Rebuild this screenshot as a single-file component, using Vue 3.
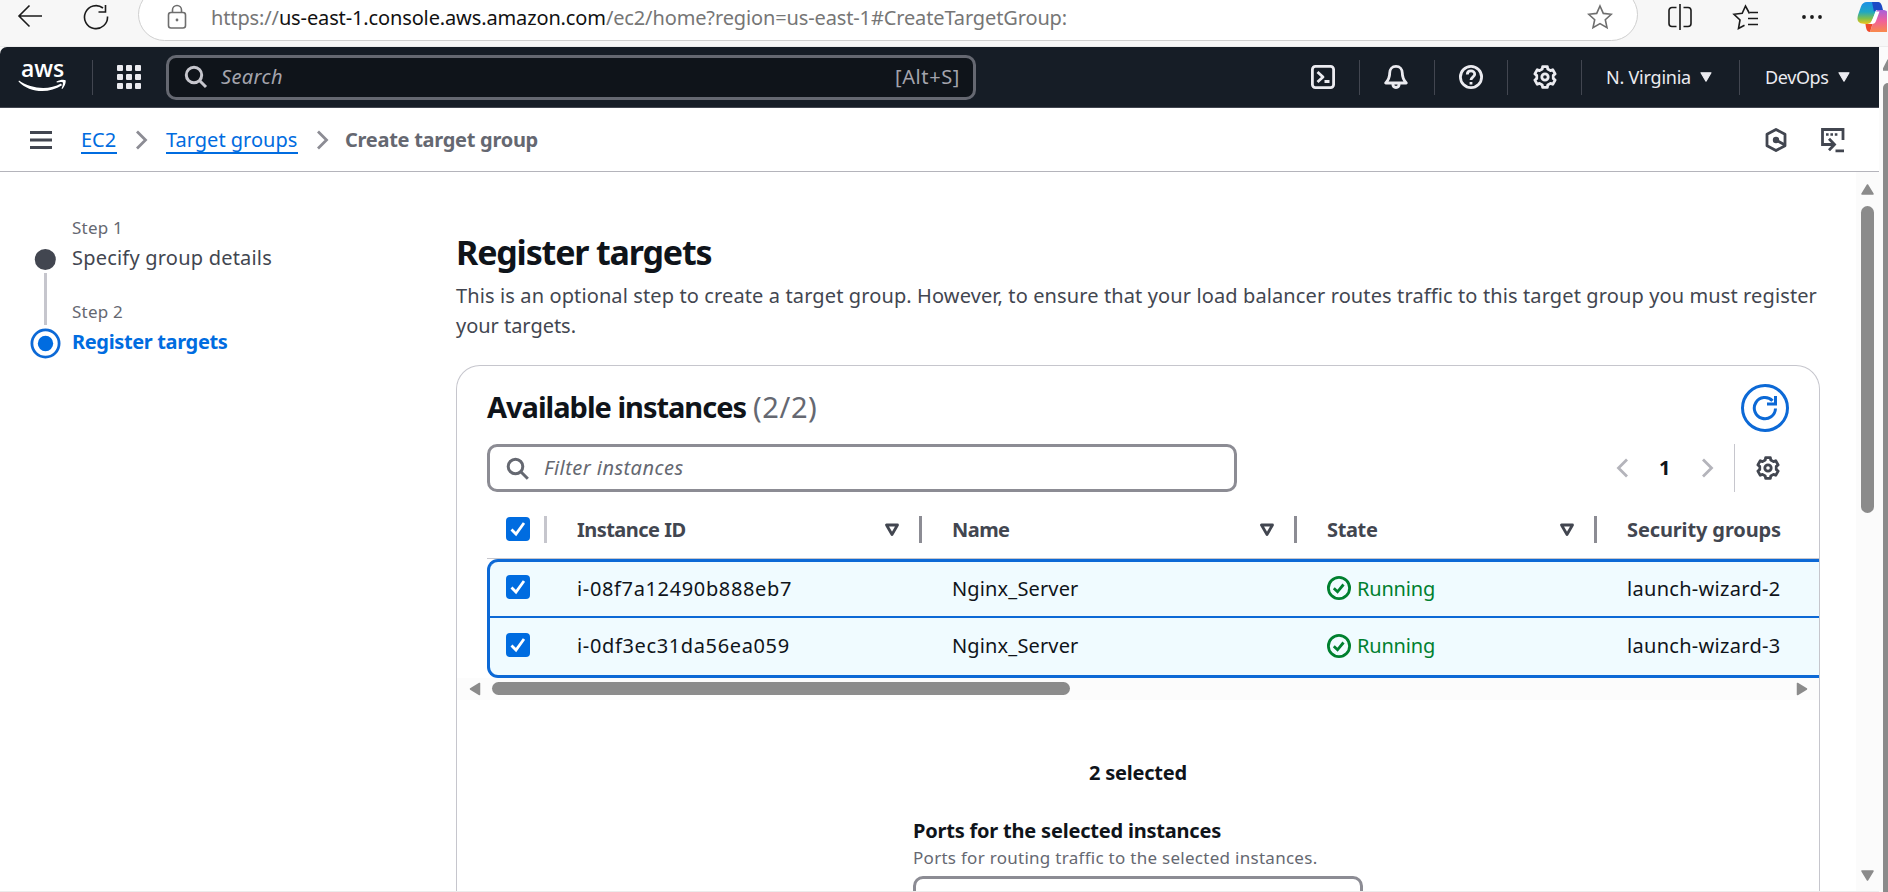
<script setup>
// Six-tooth gear outline, computed around the centre of a 24px box
const gearPath = (() => {
  const pts = []
  for (let i = 0; i < 6; i++) {
    for (const [d, r] of [[-13, 10.6], [13, 10.6], [19, 8.4], [41, 8.4]]) {
      const a = ((i * 60 + d - 90) * Math.PI) / 180
      pts.push(`${(12 + r * Math.cos(a)).toFixed(2)} ${(12 + r * Math.sin(a)).toFixed(2)}`)
    }
  }
  return `M${pts.join('L')}Z`
})()

const instances = [
  { id: 'i-08f7a12490b888eb7', name: 'Nginx_Server', state: 'Running', sg: 'launch-wizard-2' },
  { id: 'i-0df3ec31da56ea059', name: 'Nginx_Server', state: 'Running', sg: 'launch-wizard-3' },
]
</script>

<template>
  <div class="window">
    <div class="chrome">
      <svg class="c-back" width="26" height="26" viewBox="0 0 26 26"><path d="M25 13H2M12.500 2.500L2 13l10.500 10.500" /></svg>
      <svg class="c-reload" width="26" height="26" viewBox="0 0 26 26"><path d="M24.500 12.500A11.500 11.500 0 1 1 20 4M22.500 1v7h-7" /></svg>
      <div class="address">
        <svg class="c-lock" width="20" height="26" viewBox="0 0 20 26"><rect x="1.500" y="8.500" width="17" height="15.500" rx="2.500" /><path d="M5.500 8.500V6a4.500 4.500 0 0 1 9 0v2.500" /><circle class="dot" cx="10" cy="16" r="1.400" /></svg>
        <span class="url">https://<b>us-east-1.console.aws.amazon.com</b>/ec2/home?region=us-east-1#CreateTargetGroup:</span>
        <svg class="c-star" width="26" height="26" viewBox="0 0 26 26"><path d="M13 2l3.300 7.400 8 .9-6 5.400 1.700 8L13 19.600 6 23.700l1.700-8-6-5.400 8-.9z" /></svg>
      </div>
      <svg class="c-split" width="26" height="28" viewBox="0 0 26 28"><path d="M9.500 4.500H5A3 3 0 0 0 2 7.500v13a3 3 0 0 0 3 3h4.500M16.500 4.500H21a3 3 0 0 1 3 3v13a3 3 0 0 1-3 3h-4.500M13 1v26" /></svg>
      <svg class="c-fav" width="28" height="28" viewBox="0 0 28 28"><path d="M17.500 10.500L13.500 3l-3.300 7.300-8.200 1 6 5.700-1.500 8.500 6-3.200M18 9.500h8M16 15.500h10M16 21.500h10" /></svg>
      <svg class="c-more" width="22" height="6" viewBox="0 0 22 6"><circle cx="3" cy="3" r="1.900" /><circle cx="11" cy="3" r="1.900" /><circle cx="19" cy="3" r="1.900" /></svg>
      <svg class="c-copilot" width="30" height="32" viewBox="0 0 30 32">
        <defs>
          <linearGradient id="cpA" x1="0" y1="0" x2="0" y2="1"><stop offset="0" stop-color="#1b8fe6" /><stop offset=".45" stop-color="#1fa7c4" /><stop offset=".75" stop-color="#7fbf4d" /><stop offset="1" stop-color="#f0c419" /></linearGradient>
          <linearGradient id="cpB" x1="0" y1="0" x2="0" y2="1"><stop offset="0" stop-color="#a65fdc" /><stop offset=".5" stop-color="#f0609a" /><stop offset="1" stop-color="#f98a4b" /></linearGradient>
        </defs>
        <path d="M10 1h12l-5 14-3 6c-1 1.500-3 2-5 2C1 23-.5 20 1 14L4 5.500C5 2.500 7 1 10 1z" fill="url(#cpA)" />
        <path d="M15 1h6c3 0 4 3 5 8h-5c-2 0-3 .5-4 2z" fill="#1c49c4" />
        <path d="M21 9h5c4 0 6 3 6 7v15H13l3-9 2-8c.6-3 1.500-5 3-5z" fill="url(#cpB)" />
        <path d="M8.500 23h4c2 0 3-1 4-3l-3.500 11c-3 0-4-3-4.500-8z" fill="#ee4a2b" />
        <path d="M18.500 10.500h4L19 20c-.7 2-1.800 3-4 3h-2.500c1.500-.8 2.200-2 2.800-4z" fill="#fff" />
      </svg>
    </div>

    <div class="below">
      <div class="page">
        <header class="nav">
          <div class="logo"><span>aws</span>
            <svg width="50" height="14" viewBox="0 0 50 14"><path d="M1 1.500C13 10 31 11.500 43 4.500l1 1.800C31 15 11 14 .5 2.500zM38.500 2.500C42 .5 46 .3 47.600 1.200c.6 2-1 6.600-3.300 8.800l-.8-.4c1-2.600 1.800-5.400 1.300-6.200-.8-.8-4-.4-6 0z" /></svg>
          </div>
          <i class="sep s0"></i>
          <svg class="apps" width="24" height="24" viewBox="0 0 24 24"><template v-for="r in 3" :key="r"><rect v-for="c in 3" :key="c" :x="(c - 1) * 9" :y="(r - 1) * 9" width="6" height="6" rx="1" /></template></svg>
          <div class="search">
            <svg width="24" height="24" viewBox="0 0 24 24"><circle cx="10" cy="10" r="7.700" /><path d="M15.500 15.500L22 22" /></svg>
            <em class="s-ph">Search</em><span class="kbd">[Alt+S]</span>
          </div>
          <svg class="ni shell" width="24" height="24" viewBox="0 0 24 24"><rect x="1.400" y="1.400" width="21.200" height="21.200" rx="3" /><path d="M6.500 7l5.500 5-5.500 5M13.500 16.500h5" /></svg>
          <i class="sep s1"></i>
          <svg class="ni bell" width="24" height="24" viewBox="0 0 24 24"><path d="M12 1.400c-4 0-6.300 3-6.300 6.600 0 5.500-1.700 7.500-4 10h20.600c-2.300-2.500-4-4.500-4-10 0-3.600-2.300-6.600-6.300-6.600zM8.800 18.500c0 5.300 6.400 5.300 6.400 0" /></svg>
          <i class="sep s2"></i>
          <svg class="ni help" width="24" height="24" viewBox="0 0 24 24"><circle cx="12" cy="12" r="10.600" /><path d="M8.300 9.600c0-4.800 7.400-4.800 7.400-.3 0 2.900-3.700 2.900-3.700 5.700M12 17v2.600" /></svg>
          <i class="sep s3"></i>
          <svg class="ni gear" width="24" height="24" viewBox="0 0 24 24"><path :d="gearPath" /><circle cx="12" cy="12" r="3.200" /></svg>
          <i class="sep s4"></i>
          <span class="region">N. Virginia</span>
          <svg class="caret" width="12" height="10" viewBox="0 0 12 10"><path d="M1 .8h10L6 9.200z" /></svg>
          <i class="sep s5"></i>
          <span class="user">DevOps</span>
          <svg class="caret" width="12" height="10" viewBox="0 0 12 10"><path d="M1 .8h10L6 9.200z" /></svg>
        </header>

        <div class="crumbs">
          <svg class="burger" width="22" height="18" viewBox="0 0 22 18"><path d="M0 1.500h22M0 9h22M0 16.500h22" /></svg>
          <a class="link l1">EC2</a>
          <svg class="chev" width="13" height="20" viewBox="0 0 13 20"><path d="M2 1.500l8.500 8.500L2 18.500" /></svg>
          <a class="link l2">Target groups</a>
          <svg class="chev" width="13" height="20" viewBox="0 0 13 20"><path d="M2 1.500l8.500 8.500L2 18.500" /></svg>
          <span class="crumb-current">Create target group</span>
          <svg class="hex" width="24" height="26" viewBox="0 0 24 26"><path d="M12 2.500l9 4.700v11.600l-9 4.700-9-4.700V7.200z" /><circle cx="12" cy="13" r="3.200" /><path d="M12 13l9 5" /></svg>
          <svg class="term" width="26" height="26" viewBox="0 0 26 26"><path d="M8 17.500H2.500v-15h20.500v10.500M15.500 23.800h8.500M6 17.500h8M9 11.800l5.500 5.700-5.500 5.700" /><path class="dots" d="M6 7.500h12" /></svg>
        </div>

        <div class="main">
          <aside class="steps">
            <svg width="34" height="150" viewBox="0 0 34 150"><circle class="done" cx="16.300" cy="44.500" r="10.500" /><rect class="rail" x="15" y="58" width="3" height="52" /><circle class="ring" cx="16.500" cy="128.500" r="13.600" /><circle class="active" cx="16.500" cy="128.500" r="7.700" /></svg>
            <div class="step-texts">
              <div class="step-label">Step 1</div>
              <div class="step-name">Specify group details</div>
              <div class="step-label second">Step 2</div>
              <div class="step-name current">Register targets</div>
            </div>
          </aside>

          <section class="content">
            <h1>Register targets</h1>
            <p class="desc">This is an optional step to create a target group. However, to ensure that your load balancer routes traffic to this target group you must register<br /><span class="d2">your targets.</span></p>
            <div class="panel">
              <div class="p-head">
                <h2><span class="title">Available instances</span><span class="count">(2/2)</span></h2>
                <button class="refresh"><svg width="26" height="26" viewBox="0 0 26 26"><path d="M23.500 13.500A10.600 10.600 0 1 1 20.500 5.700M23.500 1v8h-8.500" /></svg></button>
              </div>
              <div class="p-tools">
                <div class="filter"><svg width="24" height="24" viewBox="0 0 24 24"><circle cx="9.500" cy="9.500" r="7.300" /><path d="M14.800 14.800l7 7" /></svg><em class="f-ph">Filter instances</em></div>
                <div class="pager">
                  <svg class="pg" width="13" height="20" viewBox="0 0 13 20"><path d="M11 1.500L2.500 10l8.500 8.500" /></svg>
                  <b>1</b>
                  <svg class="pg" width="13" height="20" viewBox="0 0 13 20"><path d="M2 1.500l8.500 8.500L2 18.500" /></svg>
                  <i class="pg-div"></i>
                  <svg class="ni dark" width="24" height="24" viewBox="0 0 24 24"><path :d="gearPath" /><circle cx="12" cy="12" r="3.200" /></svg>
                </div>
              </div>
              <div class="thead row">
                <div class="cell"><svg class="chk" width="24" height="24" viewBox="0 0 24 24"><rect width="24" height="24" rx="4" /><path d="M5.500 12.500l4.500 4.500 8-11" /></svg><i class="bar light"></i></div>
                <div class="cell"><span class="h-id">Instance ID</span><svg class="sort" width="16" height="14" viewBox="0 0 16 14"><path d="M2.500 2h11L8 11.500z" /></svg><i class="bar"></i></div>
                <div class="cell"><span class="h-name">Name</span><svg class="sort" width="16" height="14" viewBox="0 0 16 14"><path d="M2.500 2h11L8 11.500z" /></svg><i class="bar"></i></div>
                <div class="cell"><span class="h-state">State</span><svg class="sort" width="16" height="14" viewBox="0 0 16 14"><path d="M2.500 2h11L8 11.500z" /></svg><i class="bar"></i></div>
                <div class="cell"><span class="h-sg">Security groups</span></div>
              </div>
              <div class="tbody">
                <div v-for="i in instances" :key="i.id" class="row">
                  <div class="cell"><svg class="chk" width="24" height="24" viewBox="0 0 24 24"><rect width="24" height="24" rx="4" /><path d="M5.500 12.500l4.500 4.500 8-11" /></svg></div>
                  <div class="cell"><span class="c-id">{{ i.id }}</span></div>
                  <div class="cell"><span class="c-name">{{ i.name }}</span></div>
                  <div class="cell state"><svg width="24" height="24" viewBox="0 0 24 24"><circle cx="12" cy="12" r="10.600" /><path d="M6.800 12.300l3.700 3.500 6-7.300" /></svg><span class="running">{{ i.state }}</span></div>
                  <div class="cell"><span class="c-sg">{{ i.sg }}</span></div>
                </div>
              </div>
              <div class="hscroll">
                <svg width="12" height="14" viewBox="0 0 12 14"><path d="M10.500 1.500v11L1.500 7z" /></svg>
                <i></i>
                <svg width="12" height="14" viewBox="0 0 12 14"><path d="M1.500 1.500v11l9-5.500z" /></svg>
              </div>
              <div class="sel-row">2 selected</div>
              <div class="ports-form">
                <div class="p-label">Ports for the selected instances</div>
                <div class="p-desc">Ports for routing traffic to the selected instances.</div>
                <div class="p-input"></div>
              </div>
            </div>
          </section>

          <div class="vscroll">
            <svg width="15" height="13" viewBox="0 0 15 13"><path d="M7.500 2l5.500 9H2z" /></svg>
            <i></i>
            <svg width="15" height="13" viewBox="0 0 15 13"><path d="M7.500 11L2 2h11z" /></svg>
          </div>
        </div>
      </div>
      <div class="outer-scroll">
        <svg width="5" height="12" viewBox="0 0 5 12"><path d="M5 1v10H0z" /></svg>
        <i></i>
      </div>
    </div>
  </div>
</template>

<style>
body { overflow: hidden; background: #fff; }
</style>

<style scoped>
* { box-sizing: border-box; }
.window { width: 1888px; height: 892px; display: flex; flex-direction: column; overflow: hidden; font-family: "Noto Sans", "Open Sans", sans-serif; font-size: 20px; color: #0f141a; white-space: nowrap; }
svg { flex: none; display: block; fill: none; }
h1, h2, p { margin: 0; }
.chrome { height: 47px; flex: none; background: #f7f7f7; display: flex; align-items: flex-start; border-bottom: 1px solid #ececec; }
.chrome svg { stroke: #1b1b1b; stroke-width: 1.600; }
.c-back { margin: 3px 0 0 17px; }
.c-reload { margin: 4px 0 0 40px; }
.address { width: 1500px; height: 53px; margin: -12px 0 0 29px; border: 1px solid #d0d0d0; border-bottom-width: 1.500px; border-radius: 27px; background: #fff; display: flex; align-items: center; padding-top: 5px; }
.chrome .c-lock, .chrome .c-star { stroke: #6e6e6e; }
.c-lock { margin-left: 28px; }
.c-lock .dot { fill: #6e6e6e; stroke: none; }
.url { color: #767676; margin: 2px 0 0 24px; line-height: 30px; letter-spacing: -.129px; }
.url b { color: #111; font-weight: 400; }
.c-star { margin: 0 24px 0 auto; }
.c-split { margin: 3px 0 0 29px; }
.c-fav { margin: 3px 0 0 39px; }
.chrome .c-more { margin: 14px 0 0 41px; fill: #1b1b1b; stroke: none; }
.chrome .c-copilot { margin: 1px 0 0 34px; stroke: none; }
.below { flex: 1; display: flex; min-height: 0; background: #fbfbfb; }
.page { width: 1879px; flex: none; display: flex; flex-direction: column; background: #fff; border-top-left-radius: 7px; overflow: hidden; }
.nav { height: 61px; flex: none; background: #161d26; border-bottom: 1px solid #424650; display: flex; align-items: center; color: #ebebf0; padding-left: 18px; }
.logo { width: 50px; height: 32px; font: 600 23px/20px "Open Sans", sans-serif; color: #fff; }
.logo span { display: block; margin: -3px 0 0 3px; height: 21px; }
.logo svg { fill: #fff; }
.sep { width: 1px; height: 35px; background: #424650; flex: none; }
.s0 { margin: 0 24px; }
.apps { fill: #ebebf0; }
.search { width: 810px; height: 45px; margin-left: 25px; border: 3px solid #656871; border-radius: 10px; background: #0f141a; display: flex; align-items: center; padding: 0 13px 2px 15px; color: #a4a4ad; }
.search svg { stroke: #c6c6cd; stroke-width: 3; margin-top: 2px; }
.s-ph { margin-left: 13px; letter-spacing: .39px; }
.kbd { margin-left: auto; letter-spacing: .607px; }
.ni { stroke: #ebebf0; stroke-width: 2.800; stroke-linejoin: round; }
.ni.dark { stroke: #424650; }
.shell { margin-left: 335px; }
.s1 { margin: 0 24px; }
.s2 { margin: 0 24px 0 26px; }
.s3 { margin: 0 25px 0 24px; }
.s4 { margin: 0 24px; }
.region, .user { font-size: 18px; line-height: 26px; }
.region { width: 85px; letter-spacing: -.224px; }
.user { width: 64px; letter-spacing: -.388px; }
.caret { fill: #ebebf0; stroke: #ebebf0; stroke-width: 1.200; stroke-linejoin: round; margin-left: 9px; }
.s5 { margin: 0 25px 0 27px; }
.crumbs { height: 64px; flex: none; border-bottom: 1px solid #b4b4bb; display: flex; align-items: center; padding-left: 30px; }
.burger { stroke: #424650; stroke-width: 2.800; }
.link { color: #006ce0; border-bottom: 2px solid #006ce0; line-height: 24px; height: 26px; margin-top: 2px; }
.l1 { margin-left: 29px; width: 36px; }
.l2 { margin-left: 18px; width: 132px; }
.chev { stroke: #8c8c94; stroke-width: 2.800; margin-left: 18px; }
.crumb-current { font-weight: 700; color: #656871; margin-left: 16px; width: 193px; line-height: 24px; letter-spacing: -.28px; }
.hex { margin-left: auto; stroke: #424650; stroke-width: 2.800; stroke-linejoin: round; }
.hex circle { fill: #424650; stroke: none; }
.term { stroke: #424650; stroke-width: 2.800; margin: 0 33px 0 32px; }
.term .dots { stroke-dasharray: 2.600 1.800; stroke-width: 2.600; }
.main { flex: 1; display: flex; min-height: 0; border-bottom: 1px solid #ececec; }
.steps { width: 456px; flex: none; display: flex; padding: 43px 0 0 29px; }
.done { fill: #424650; }
.rail { fill: #c6c6cd; }
.ring { stroke: #0c69d6; stroke-width: 2.800; fill: #fff; }
.active { fill: #006ce0; }
.step-texts { margin: 1px 0 0 9px; }
.step-label { font-size: 17px; line-height: 24px; color: #656871; letter-spacing: .22px; }
.step-name { line-height: 30px; margin-top: 3px; color: #424650; letter-spacing: .208px; }
.second { margin-top: 27px; }
.step-name.current { font-weight: 700; color: #006ce0; letter-spacing: -.355px; }
.content { width: 1364px; flex: none; padding-top: 59px; display: flex; flex-direction: column; }
.content h1 { font-size: 34px; line-height: 42px; letter-spacing: -1.157px; }
.desc { margin-top: 8px; line-height: 30px; color: #424650; letter-spacing: .117px; }
.d2 { letter-spacing: -.029px; }
.panel { flex: 1; min-height: 0; margin-top: 24px; border: 1px solid #c6c6cd; border-bottom: 0; border-radius: 24px 24px 0 0; overflow: hidden; padding-top: 18px; display: flex; flex-direction: column; }
.p-head { height: 48px; flex: none; display: flex; justify-content: space-between; align-items: center; padding: 0 30px; }
.p-head h2 { font-size: 29px; line-height: 40px; margin-top: -3px; }
.title { letter-spacing: -1.012px; }
.count { font-weight: 400; color: #656871; letter-spacing: .6px; margin-left: 7px; }
.refresh { width: 48px; height: 48px; border: 3px solid #0c69d6; border-radius: 24px; background: #fff; padding: 0; display: grid; place-items: center; }
.refresh svg { stroke: #0c69d6; stroke-width: 3; }
.p-tools { height: 48px; flex: none; margin-top: 12px; display: flex; justify-content: space-between; padding: 0 39px 0 30px; }
.filter { width: 750px; border: 3px solid #8c8c94; border-radius: 10px; display: flex; align-items: center; padding-left: 16px; }
.filter svg { stroke: #656871; stroke-width: 3; margin-top: 1px; }
.f-ph { color: #656871; margin: -2px 0 0 14px; letter-spacing: .451px; }
.pager { display: flex; align-items: center; }
.pg { stroke: #b4b4bb; stroke-width: 2.800; }
.pager b { margin: -1px 31px 0 30px; width: 11px; }
.pg-div { width: 1px; height: 48px; background: #c6c6cd; margin: 0 21px 0 20px; }
.row { display: grid; grid-template-columns: 59px 375px 375px 300px 1fr; flex: none; }
.thead { margin-left: 30px; padding-top: 8px; height: 67px; border-bottom: 1px solid #c6c6cd; color: #424650; font-weight: 700; }
.cell { display: flex; align-items: center; padding-left: 31px; }
.cell:first-child { padding-left: 19px; }
.h-id { letter-spacing: -.534px; }
.h-name { letter-spacing: -.547px; }
.h-state { letter-spacing: -.362px; }
.h-sg { letter-spacing: -.125px; }
.c-id { letter-spacing: .638px; }
.c-name { letter-spacing: .15px; }
.running { letter-spacing: -.192px; }
.c-sg { letter-spacing: .297px; }
.chk { fill: #006ce0; }
.chk path { fill: none; stroke: #fff; stroke-width: 2.800; }
.sort { margin-left: auto; margin-right: 19px; stroke: #424650; stroke-width: 2.800; stroke-linejoin: round; position: relative; top: 1px; }
.bar { width: 3px; height: 27px; background: #8c8c94; flex: none; }
.bar.light { background: #c6c6cd; margin-left: 14px; }
.thead .cell:not(:first-child) .bar { margin-right: -1px; }
.tbody { flex: none; height: 119px; margin-left: 30px; border: 3px solid #0c69d6; border-right: 0; border-radius: 11px 0 0 11px; background: #f0fbff; overflow: hidden; }
.tbody .row { height: 56px; border-bottom: 2px solid #0c69d6; margin-left: -3px; }
.tbody .row:last-child { border-bottom: 0; height: 57px; }
.tbody .chk { margin-top: -4px; }
.tbody span { margin-top: -2px; }
.state { color: #00802f; gap: 6px; }
.state svg { stroke: #00802f; stroke-width: 2.800; margin-top: -2px; }
.hscroll { height: 22px; flex: none; background: #fcfcfc; display: flex; align-items: flex-start; padding: 4px 11px 0 12px; }
.hscroll svg, .vscroll svg, .outer-scroll svg { fill: #8b8b8b; stroke: #8b8b8b; stroke-width: 1.500; stroke-linejoin: round; }
.hscroll i { width: 578px; height: 13px; border-radius: 7px; background: #8b8b8b; margin: 0 auto 0 11px; }
.sel-row { margin-top: 58px; line-height: 30px; font-weight: 700; text-align: center; flex: none; letter-spacing: -.211px; }
.ports-form { width: 450px; margin: 28px auto 0; flex: none; }
.p-label { font-weight: 700; line-height: 30px; letter-spacing: -.207px; }
.p-desc { font-size: 17px; line-height: 24px; color: #656871; letter-spacing: .281px; }
.p-input { height: 48px; border: 3px solid #8c8c94; border-radius: 10px; margin-top: 6px; }
.vscroll { width: 23px; background: #fbfbfb; margin-left: 36px; flex: none; display: flex; flex-direction: column; align-items: center; padding: 11px 0 9px; }
.vscroll i { width: 13px; height: 307px; border-radius: 7px; background: #8b8b8b; margin: 10px 0 auto; }
.outer-scroll { flex: 1; display: flex; flex-direction: column; align-items: flex-end; padding-top: 12px; }
.outer-scroll i { width: 5px; flex: 1; background: #8b8b8b; margin-top: 12px; border-top-left-radius: 6px; }
</style>
